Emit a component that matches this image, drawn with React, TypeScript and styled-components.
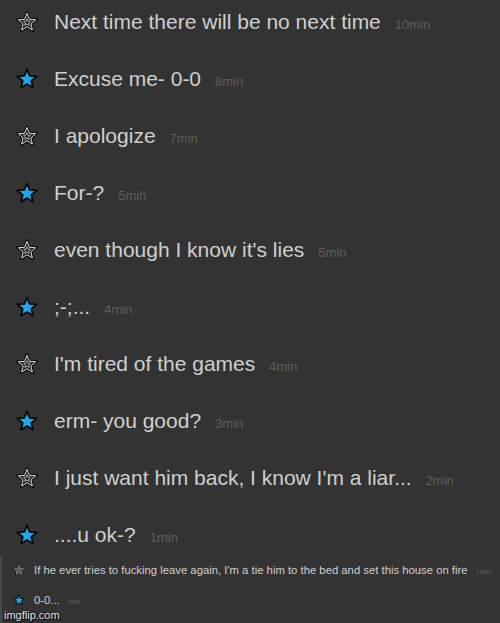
import React from "react";
import styled, { createGlobalStyle } from "styled-components";

const Global = createGlobalStyle`
  html, body { margin: 0; padding: 0; background: #333333; }
  body { font-family: "Liberation Sans", Arial, sans-serif; }
`;

const Page = styled.div`
  width: 500px;
  height: 623px;
  background: #333333;
  display: flex;
  flex-direction: column;
  overflow: hidden;
  position: relative;
`;

const List = styled.div`
  display: flex;
  flex-direction: column;
  gap: 27px;
  padding-top: 7px;
`;

const Row = styled.div<{ $small?: boolean }>`
  display: flex;
  align-items: center;
  height: ${(p) => (p.$small ? 20 : 30)}px;
  padding-left: ${(p) => (p.$small ? 11 : 16)}px;
`;

const StarBox = styled.div<{ $small?: boolean }>`
  width: ${(p) => (p.$small ? 12 : 22)}px;
  height: ${(p) => (p.$small ? 12 : 22)}px;
  margin-right: ${(p) => (p.$small ? 9 : 16)}px;
  display: flex;
  svg { width: 100%; height: 100%; display: block; }
`;

const Text = styled.span<{ $small?: boolean }>`
  color: #cfcfcf;
  font-size: ${(p) => (p.$small ? 11.3 : 21)}px;
  white-space: nowrap;
`;

const Time = styled.span<{ $small?: boolean }>`
  color: #5e5e5e;
  font-size: ${(p) => (p.$small ? 7 : 13)}px;
  margin-left: ${(p) => (p.$small ? 8 : 14)}px;
  margin-top: ${(p) => (p.$small ? 2 : 5)}px;
  white-space: nowrap;
`;

const Bottom = styled.div`
  margin-top: 7px;
  flex: 1;
  border-left: 2px solid #4a4a4a;
  display: flex;
  flex-direction: column;
  gap: 10px;
  padding-top: 3px;
  position: relative;
`;

const Watermark = styled.div`
  position: absolute;
  left: 2px;
  bottom: 2px;
  color: #e8e8e8;
  font-size: 11px;
  font-family: "Liberation Sans", Arial, sans-serif;
  text-shadow: 0 0 2px #000, 1px 1px 1px #000;
`;

const STAR = "M12 1.5 L14.9 8.6 L22.5 9.2 L16.7 14.1 L18.5 21.6 L12 17.6 L5.5 21.6 L7.3 14.1 L1.5 9.2 L9.1 8.6 Z";
const INNER = "M12 8.5 L13.1 11.1 L15.8 11.3 L13.7 13.1 L14.4 15.8 L12 14.3 L9.6 15.8 L10.3 13.1 L8.2 11.3 L10.9 11.1 Z";

const Star = ({ filled }: { filled: boolean }) => (
  <svg viewBox="0 0 24 24">
    {filled ? (
      <path d={STAR} fill="#1ca8ec" stroke="#0a0a0a" strokeWidth="2" strokeLinejoin="round" />
    ) : (
      <>
        <path d={STAR} fill="#2a2a2a" stroke="#0a0a0a" strokeWidth="2.6" strokeLinejoin="round" />
        <path d={STAR} fill="none" stroke="#e6e6e6" strokeWidth="1.2" strokeLinejoin="round" transform="translate(1.2 1.3) scale(0.9)" />
        <path d={INNER} fill="none" stroke="#bdbdbd" strokeWidth="0.9" />
      </>
    )}
  </svg>
);

const messages: { text: string; time: string; filled: boolean }[] = [
  { text: "Next time there will be no next time", time: "10min", filled: false },
  { text: "Excuse me- 0-0", time: "8min", filled: true },
  { text: "I apologize", time: "7min", filled: false },
  { text: "For-?", time: "5min", filled: true },
  { text: "even though I know it's lies", time: "5min", filled: false },
  { text: ";-;...", time: "4min", filled: true },
  { text: "I'm tired of the games", time: "4min", filled: false },
  { text: "erm- you good?", time: "3min", filled: true },
  { text: "I just want him back, I know I'm a liar...", time: "2min", filled: false },
  { text: "....u ok-?", time: "1min", filled: true },
];

const bottom = [
  {
    text: "If he ever tries to fucking leave again, I'm a tie him to the bed and set this house on fire",
    time: "1min",
    filled: false,
  },
  { text: "0-0...", time: "now", filled: true },
];

export default function App() {
  return (
    <Page>
      <Global />
      <List>
        {messages.map((m, i) => (
          <Row key={i}>
            <StarBox>
              <Star filled={m.filled} />
            </StarBox>
            <Text>{m.text}</Text>
            <Time>{m.time}</Time>
          </Row>
        ))}
      </List>
      <Bottom>
        {bottom.map((m, i) => (
          <Row key={i} $small>
            <StarBox $small>
              <Star filled={m.filled} />
            </StarBox>
            <Text $small>{m.text}</Text>
            <Time $small>{m.time}</Time>
          </Row>
        ))}
        <Watermark>imgflip.com</Watermark>
      </Bottom>
    </Page>
  );
}
